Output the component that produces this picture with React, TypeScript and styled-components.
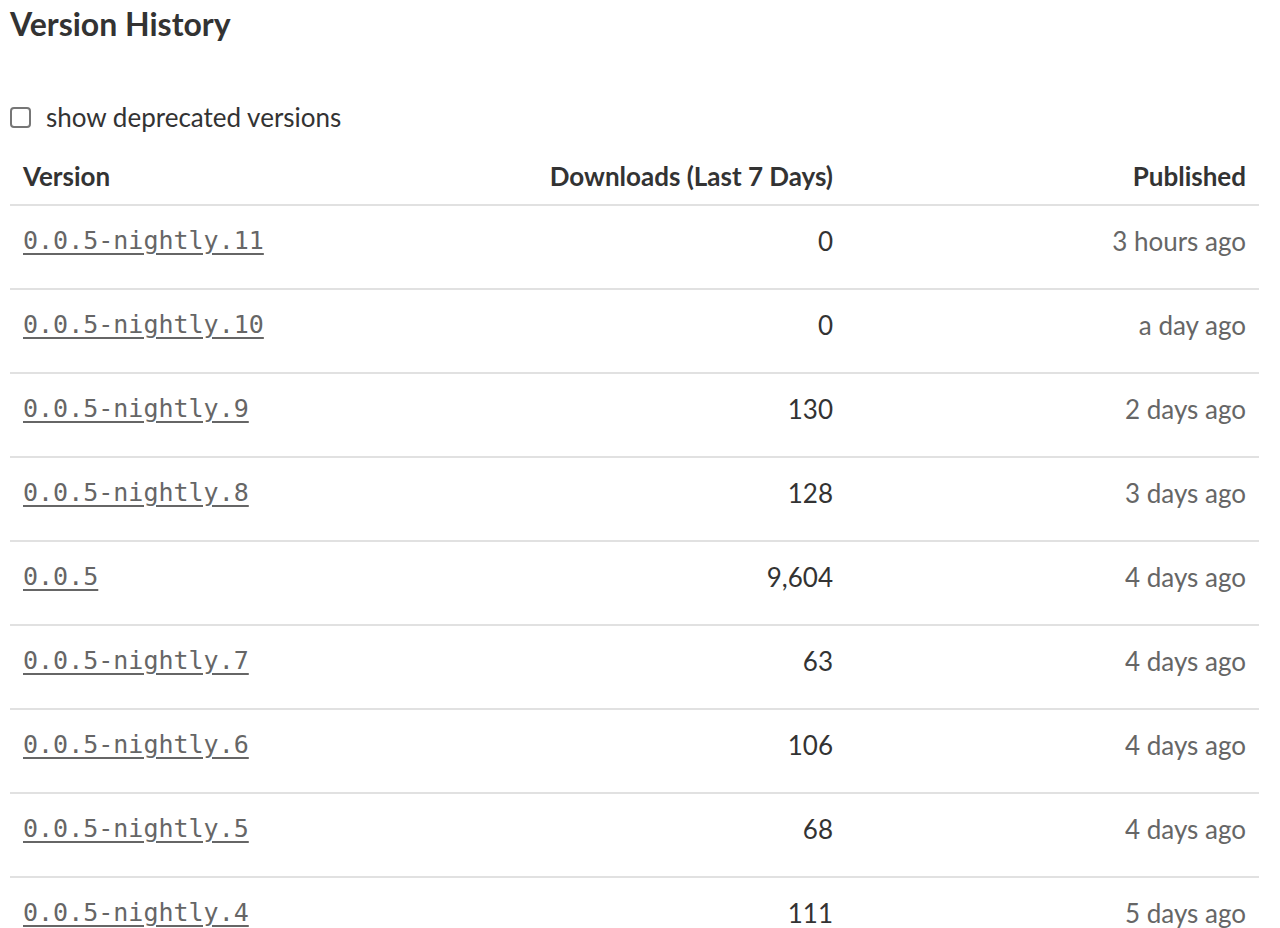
import React from "react";
import styled, { createGlobalStyle } from "styled-components";

const Global = createGlobalStyle`
  html, body { margin: 0; padding: 0; background: #fff; }
  body { font-family: Lato, "Noto Sans", sans-serif; color: #333; }
`;

const Page = styled.div`
  padding: 0 21px 0 10px;
`;

const Title = styled.h2`
  margin: 0;
  font-size: 32px;
  line-height: 48px;
  font-weight: 700;
  color: #333;
`;

const FilterRow = styled.label`
  display: flex;
  align-items: center;
  gap: 15px;
  height: 40px;
  margin-top: 49px;
  font-size: 26px;
  color: #333;
`;

const Box = styled.span`
  width: 17px;
  height: 17px;
  border: 2px solid #767676;
  border-radius: 4px;
  flex: none;
`;

const Table = styled.table`
  width: 100%;
  border-collapse: collapse;
  margin-top: 11px;
  font-size: 26px;
`;

const Th = styled.th<{ $align?: string; $width?: string }>`
  text-align: ${(p) => p.$align || "left"};
  width: ${(p) => p.$width || "auto"};
  font-weight: 700;
  color: #333;
  height: 56px;
  padding: 0 13px;
  border-bottom: 2px solid #e1e1e1;
`;

const Row = styled.tr`
  border-bottom: 2px solid #e1e1e1;
  &:last-child { border-bottom: none; }
`;

const Td = styled.td<{ $align?: string; $muted?: boolean }>`
  text-align: ${(p) => p.$align || "left"};
  color: ${(p) => (p.$muted ? "#666" : "#333")};
  line-height: 36px;
  height: 36px;
  vertical-align: top;
  padding: 17px 13px 29px;
`;

const VersionLink = styled.a`
  display: inline-block;
  vertical-align: top;
  line-height: 36px;
  font-family: "DejaVu Sans Mono", monospace;
  font-size: 25px;
  color: #666;
  text-decoration: underline;
  text-underline-offset: 4px;
`;

const rows = [
  ["0.0.5-nightly.11", "0", "3 hours ago"],
  ["0.0.5-nightly.10", "0", "a day ago"],
  ["0.0.5-nightly.9", "130", "2 days ago"],
  ["0.0.5-nightly.8", "128", "3 days ago"],
  ["0.0.5", "9,604", "4 days ago"],
  ["0.0.5-nightly.7", "63", "4 days ago"],
  ["0.0.5-nightly.6", "106", "4 days ago"],
  ["0.0.5-nightly.5", "68", "4 days ago"],
  ["0.0.5-nightly.4", "111", "5 days ago"],
];

export default function App() {
  return (
    <Page>
      <Global />
      <Title>Version History</Title>
      <FilterRow>
        <Box />
        show deprecated versions
      </FilterRow>
      <Table>
        <thead>
          <tr>
            <Th>Version</Th>
            <Th $align="right">Downloads (Last 7 Days)</Th>
            <Th $align="right" $width="387px">
              Published
            </Th>
          </tr>
        </thead>
        <tbody>
          {rows.map(([v, d, p]) => (
            <Row key={v}>
              <Td>
                <VersionLink href="#">{v}</VersionLink>
              </Td>
              <Td $align="right">{d}</Td>
              <Td $align="right" $muted>
                {p}
              </Td>
            </Row>
          ))}
        </tbody>
      </Table>
    </Page>
  );
}
